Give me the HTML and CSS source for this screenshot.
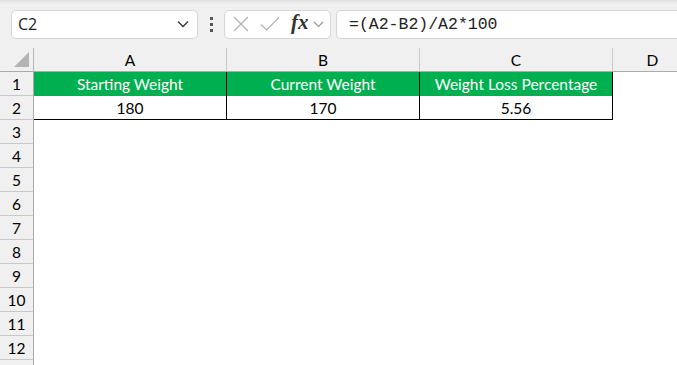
FILE: index.html
```html
<!DOCTYPE html>
<html>
<head>
  <title>Weight Loss Sheet</title>
  <link rel="stylesheet" href="styles.css">
</head>
<body>

  <div class="toolbar">
    <div class="namebox">
      <span>C2</span>
      <svg width="12" height="8" viewBox="0 0 12 8"><path d="M1 1.5 L6 6.5 L11 1.5" fill="none" stroke="#333" stroke-width="1.3"/></svg>
    </div>
    <div class="kebab"><i></i><i></i><i></i></div>
    <div class="fxbox">
      <svg width="16" height="16" viewBox="0 0 16 16"><path d="M1 1 L15 15 M15 1 L1 15" stroke="#b0b0b0" stroke-width="1.2"/></svg>
      <svg width="20" height="16" viewBox="0 0 20 16"><path d="M1 8.5 L6.5 14 L19 1.5" fill="none" stroke="#b0b0b0" stroke-width="1.2"/></svg>
      <span class="fx">fx</span>
      <svg width="11" height="7" viewBox="0 0 11 7"><path d="M1 1 L5.5 5.5 L10 1" fill="none" stroke="#999" stroke-width="1.2"/></svg>
    </div>
    <div class="formula">=(A2-B2)/A2*100</div>
  </div>

  <div class="sheet">
    <div class="corner"><span class="tri"></span></div>
    <div class="colhead">A</div>
    <div class="colhead">B</div>
    <div class="colhead">C</div>
    <div class="colhead last">D</div>

    <div class="rowhead">1</div>
    <div class="cell head">Starting Weight</div>
    <div class="cell head">Current Weight</div>
    <div class="cell head">Weight Loss Percentage</div>
    <div class="cell"></div>

    <div class="rowhead">2</div>
    <div class="cell boxed">180</div>
    <div class="cell boxed">170</div>
    <div class="cell boxed">5.56</div>
    <div class="cell"></div>
  </div>

  <div class="rows" id="rows"></div>

  <script>
    // empty rows 3..12, then one more header cell cut by the window edge
    const rows = document.getElementById('rows');
    for (let i = 3; i <= 13; i++) {
      const head = document.createElement('div');
      head.className = 'rowhead';
      head.textContent = i <= 12 ? i : '';
      rows.appendChild(head);
      const blank = document.createElement('div');
      blank.className = 'blank';
      rows.appendChild(blank);
    }
  </script>
</body>
</html>
```

FILE: styles.css
```css
body {
  margin: 0;
  background-color: #ffffff;
  font-family: Lato, "Open Sans", sans-serif;
  color: #000000;
  overflow: hidden;
}

.toolbar {
  display: flex;
  align-items: center;
  height: 48px;
  padding: 0 0 0 11px;
  box-sizing: border-box;
  background: linear-gradient(#dcdcdc 0px, #ebebeb 2px, #f0f0f0 5px);
}

.namebox,
.fxbox,
.formula {
  height: 29px;
  box-sizing: border-box;
  background-color: #ffffff;
  border: 1px solid #d6d6d6;
  border-radius: 5px;
  display: flex;
  align-items: center;
}

.namebox {
  width: 187px;
  justify-content: space-between;
  padding: 0 8px 0 6px;
  font-family: "Open Sans", Lato, sans-serif;
  font-size: 16px;
  color: #222222;
}

.kebab {
  width: 25px;
  margin-left: 1px;
  display: flex;
  flex-direction: column;
  align-items: center;
  gap: 3px;
}

.kebab i {
  display: block;
  width: 3px;
  height: 3px;
  background-color: #555555;
}

.fxbox {
  width: 107px;
  padding: 0 3px 0 8px;
}

.fxbox svg:nth-child(2) {
  margin-left: 11px;
}

.fx {
  margin-left: 11px;
  margin-top: -3px;
  font-family: "Liberation Serif", serif;
  font-style: italic;
  font-weight: bold;
  font-size: 21px;
  color: #333333;
  line-height: 1;
}

.fxbox svg:last-child {
  margin-left: 4px;
}

.formula {
  flex: 1;
  margin-left: 5px;
  border-right: none;
  border-radius: 5px 0 0 5px;
  padding-left: 12px;
  font-family: "Liberation Mono", monospace;
  font-size: 16.5px;
  color: #222222;
}

.sheet,
.rows {
  display: grid;
  grid-template-columns: 34px 193px 193px 193px 80px;
  grid-auto-rows: 24px;
}

.corner {
  background-color: #f0f0f0;
  border-right: 1px solid #b5b5b5;
  border-bottom: 1px solid #ababab;
  position: relative;
}

.tri {
  position: absolute;
  right: 4px;
  bottom: 4px;
  width: 0;
  height: 0;
  border-left: 15px solid transparent;
  border-bottom: 15px solid #b4b4b4;
}

.colhead {
  background-color: #f0f0f0;
  border-right: 1px solid #cacaca;
  border-bottom: 1px solid #ababab;
  display: flex;
  align-items: center;
  justify-content: center;
  font-size: 15.5px;
  padding-top: 1px;
  box-sizing: border-box;
}

.rowhead {
  background-color: #f0f0f0;
  border-right: 1px solid #ababab;
  border-bottom: 1px solid #c8c8c8;
  display: flex;
  align-items: center;
  justify-content: center;
  font-size: 15.5px;
  box-sizing: border-box;
}

.cell {
  display: flex;
  align-items: center;
  justify-content: center;
  font-size: 15.5px;
  box-sizing: border-box;
}

.cell.head {
  background-color: #00b050;
  color: #ffffff;
  border-right: 1px solid #000000;
}

.cell.boxed {
  border-right: 1px solid #000000;
  border-bottom: 1px solid #000000;
}

.blank {
  grid-column: span 4;
}
```
